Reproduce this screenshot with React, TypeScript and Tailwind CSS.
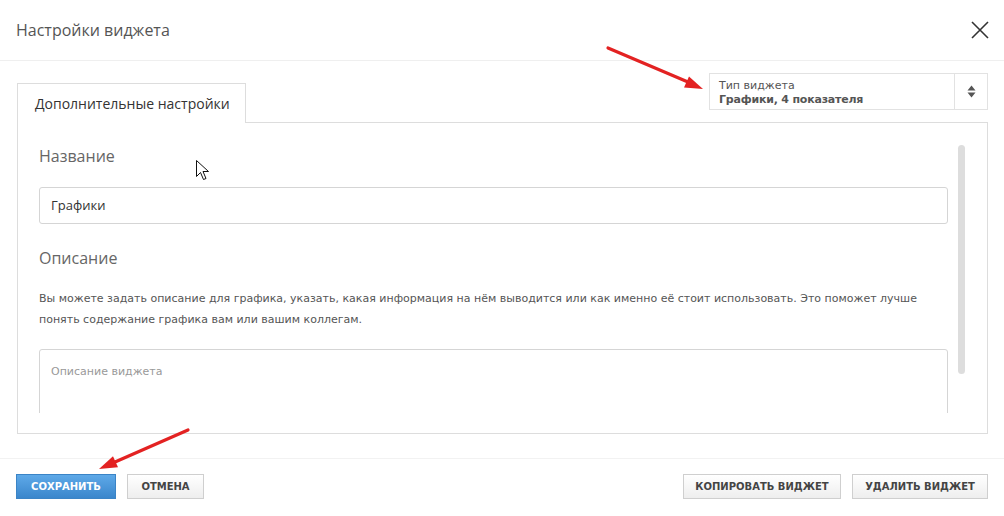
import React from "react";

const ui = { fontFamily: '"Open Sans", "Noto Sans", sans-serif' };
const tahoma = { fontFamily: '"DejaVu Sans", "Liberation Sans", sans-serif' };

function Button({ label, primary, width }: { label: string; primary?: boolean; width: string }) {
  return (
    <button
      style={tahoma}
      className={
        primary
          ? `h-[25px] ${width} border border-[#3b84c6] bg-gradient-to-b from-[#5ea9e8] to-[#3a86cc] text-[10px] font-bold text-white`
          : `h-[25px] ${width} border border-[#cfcfcf] bg-gradient-to-b from-white to-[#eeeeee] text-[10px] font-bold text-[#444]`
      }
    >
      {label}
    </button>
  );
}

function Arrow({ x1, y1, x2, y2, head }: { x1: number; y1: number; x2: number; y2: number; head: string }) {
  return (
    <g>
      <line x1={x1} y1={y1} x2={x2} y2={y2} stroke="#e32222" strokeWidth="3.2" strokeLinecap="round" />
      <polygon points={head} fill="#e32222" />
    </g>
  );
}

export default function App() {
  return (
    <div className="relative h-[516px] w-[1004px] overflow-hidden bg-white">
      {/* header */}
      <div className="flex h-[61px] items-center justify-between border-b border-[#efefef] pl-4 pr-[15px]">
        <h2 style={ui} className="text-[16px] text-[#555]">
          Настройки виджета
        </h2>
        <svg width="18" height="18" viewBox="0 0 18 18" className="mb-px">
          <path d="M1 1 L17 17 M17 1 L1 17" stroke="#333" strokeWidth="1.6" />
        </svg>
      </div>

      <div className="pl-[17px] pr-4 pt-3">
        {/* tab + widget type select */}
        <div className="flex justify-between">
          <div
            style={ui}
            className="relative z-10 -mb-px mt-[10px] flex h-[40px] w-[229px] items-center border border-b-0 border-[#dddddd] bg-white pl-[17px] text-[14px] text-[#333]"
          >
            Дополнительные настройки
          </div>
          <div className="flex h-[37px] w-[279px] border border-[#e2e2e2] bg-white">
            <div style={tahoma} className="flex flex-1 flex-col justify-center pl-[9px] pt-[3px] leading-[14px]">
              <span className="text-[11px] text-[#555]">Тип виджета</span>
              <span className="text-[11px] font-bold tracking-[-0.2px] text-[#555]">Графики, 4 показателя</span>
            </div>
            <div className="flex w-[33px] items-center justify-center border-l border-[#e2e2e2]">
              <svg width="9" height="13" viewBox="0 0 9 13">
                <path d="M4.5 0.5 L8.5 5.5 H0.5 Z M0.5 7.5 H8.5 L4.5 12.5 Z" fill="#555" />
              </svg>
            </div>
          </div>
        </div>

        {/* panel */}
        <div className="relative h-[312px] border border-[#dddddd] pb-5">
          <div className="h-[290px] overflow-hidden pl-[21px] pr-[39px] pt-[21px]">
            <div style={ui} className="text-[16px] leading-6 text-[#666]">
              Название
            </div>
            <div
              style={ui}
              className="mt-[19px] flex h-[37px] items-center rounded-[3px] border border-[#d5d5d5] pl-[11px] text-[13px] text-[#333]"
            >
              Графики
            </div>
            <div style={ui} className="mt-[22px] text-[16px] leading-6 text-[#666]">
              Описание
            </div>
            <p style={tahoma} className="mt-[18px] text-[11px] leading-[21px] text-[#555]">
              Вы можете задать описание для графика, указать, какая информация на нём выводится или как именно её стоит
              использовать. Это поможет лучше понять содержание графика вам или вашим коллегам.
            </p>
            <div
              style={tahoma}
              className="mt-[19px] h-[100px] rounded-[3px] border border-[#d5d5d5] pl-[11px] pt-[14px] text-[11px] text-[#999]"
            >
              Описание виджета
            </div>
          </div>
          {/* scrollbar thumb */}
          <div className="absolute right-[22px] top-[22px] h-[229px] w-[7px] rounded-full bg-[#dddddd]" />
        </div>
      </div>

      {/* footer */}
      <div className="mt-6 flex justify-between border-t border-[#f2f2f2] px-4 pt-[15px]">
        <div className="flex gap-[11px]">
          <Button label="СОХРАНИТЬ" primary width="w-[100px]" />
          <Button label="ОТМЕНА" width="w-[77px]" />
        </div>
        <div className="flex gap-[11px]">
          <Button label="КОПИРОВАТЬ ВИДЖЕТ" width="w-[158px]" />
          <Button label="УДАЛИТЬ ВИДЖЕТ" width="w-[136px]" />
        </div>
      </div>

      {/* annotation arrows and pointer */}
      <svg className="pointer-events-none absolute left-0 top-0" width="1004" height="516">
        <Arrow x1={608} y1={48} x2={688} y2={82} head="703,89 684,87.4 689,76.4" />
        <Arrow x1={188} y1={430} x2={115} y2={462} head="99,469 113,456.3 118,467.3" />
        <path
          d="M196.5 160.5 L196.5 176.5 L200.5 172.5 L203.5 179.5 L206 178.5 L203 171.5 L208.5 171.5 Z"
          fill="#fff"
          stroke="#111"
          strokeWidth="1"
          strokeLinejoin="round"
        />
      </svg>
    </div>
  );
}
